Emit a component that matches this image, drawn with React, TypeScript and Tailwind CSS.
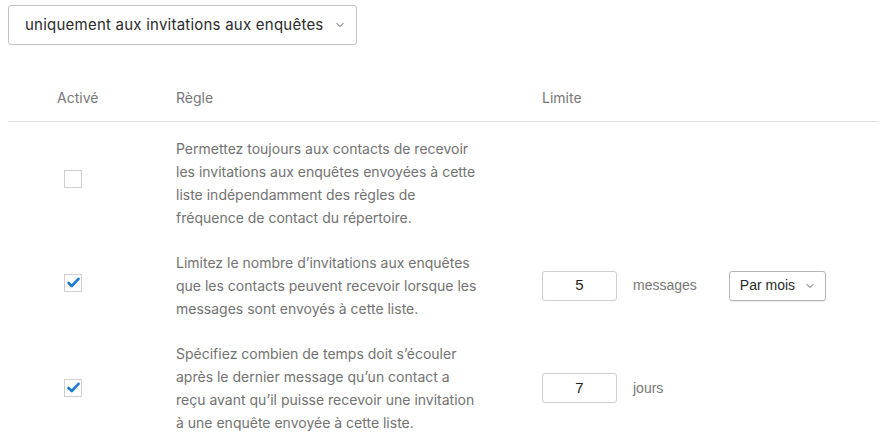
import { ChevronDown } from 'lucide-react';

interface Rule {
  enabled: boolean;
  lines: string[];
  nudge: string;
  limit?: { value: string; unit: string; period?: string };
}

const rules: Rule[] = [
  {
    enabled: false,
    lines: [
      'Permettez toujours aux contacts de recevoir',
      'les invitations aux enquêtes envoyées à cette',
      'liste indépendamment des règles de',
      'fréquence de contact du répertoire.',
    ],
    nudge: '-mt-[9px]',
  },
  {
    enabled: true,
    lines: [
      'Limitez le nombre d’invitations aux enquêtes',
      'que les contacts peuvent recevoir lorsque les',
      'messages sont envoyés à cette liste.',
    ],
    nudge: '-mt-[6px]',
    limit: { value: '5', unit: 'messages', period: 'Par mois' },
  },
  {
    enabled: true,
    lines: [
      'Spécifiez combien de temps doit s’écouler',
      'après le dernier message qu’un contact a',
      'reçu avant qu’il puisse recevoir une invitation',
      'à une enquête envoyée à cette liste.',
    ],
    nudge: '-mt-[1px]',
    limit: { value: '7', unit: 'jours' },
  },
];

function Checkbox({ checked }: { checked: boolean }) {
  return (
    <div className="flex h-[18px] w-[18px] items-center justify-center border border-[#cfcfcf] bg-white">
      {checked && (
        <svg width="13" height="11" viewBox="0 0 13 11" fill="none">
          <path d="M1.5 6 L4.8 9 L11.5 1.8" stroke="#1b7bd0" strokeWidth="2.6" strokeLinecap="round" strokeLinejoin="round" />
        </svg>
      )}
    </div>
  );
}

export default function App() {
  return (
    <div className="min-h-[443px] w-[883px] bg-white font-['Inter',sans-serif]">
      <div className="px-2 pt-[5px]">
        <button className="flex h-[40px] w-[349px] items-center rounded-[3px] border border-[#c4c4c4] bg-white pl-[16px] text-[15px] tracking-[0.23px] text-[#2b2b2b]">
          <span>uniquement aux invitations aux enquêtes</span>
          <ChevronDown className="ml-[10px] h-[12px] w-[12px] text-[#555]" strokeWidth={2} />
        </button>
      </div>

      <div className="mt-[43px] flex h-[20px] items-center pl-2 text-[14px] leading-[20px] text-[#777]">
        <div className="w-[168px] pl-[49px]">Activé</div>
        <div className="w-[366px]">Règle</div>
        <div>Limite</div>
      </div>
      <div className="mx-2 mt-[13px] h-px w-[871px] bg-[#e0e0e0]" />

      <div className="pt-[4px]">
        {rules.map((r, i) => (
          <div key={i} className="flex items-center py-[11px] pl-2">
            <div className={`w-[168px] pl-[56px] ${r.nudge}`}>
              <Checkbox checked={r.enabled} />
            </div>
            <div className="w-[366px] text-[14px] leading-[23px] text-[#727272]">
              {r.lines.map((l, j) => (
                <div key={j} className="whitespace-nowrap">
                  {l}
                </div>
              ))}
            </div>
            {r.limit && (
              <div className="flex items-center font-['Liberation_Sans',Arial,sans-serif]">
                <div className="flex h-[30px] w-[75px] items-center justify-center rounded-[3px] border border-[#cfcfcf] text-[15px] text-[#1e1e1e]">
                  {r.limit.value}
                </div>
                <span className="ml-[16px] text-[14px] text-[#777]">{r.limit.unit}</span>
                {r.limit.period && (
                  <div className="ml-[32px] flex h-[30px] w-[97px] items-center rounded-[3px] border border-[#b5b5b5] pl-[10px] text-[14px] text-[#2b2b2b] shadow-[0_1px_1px_rgba(0,0,0,0.08)]">
                    {r.limit.period}
                    <ChevronDown className="ml-[9px] h-[12px] w-[12px] text-[#555]" strokeWidth={2} />
                  </div>
                )}
              </div>
            )}
          </div>
        ))}
      </div>
    </div>
  );
}
